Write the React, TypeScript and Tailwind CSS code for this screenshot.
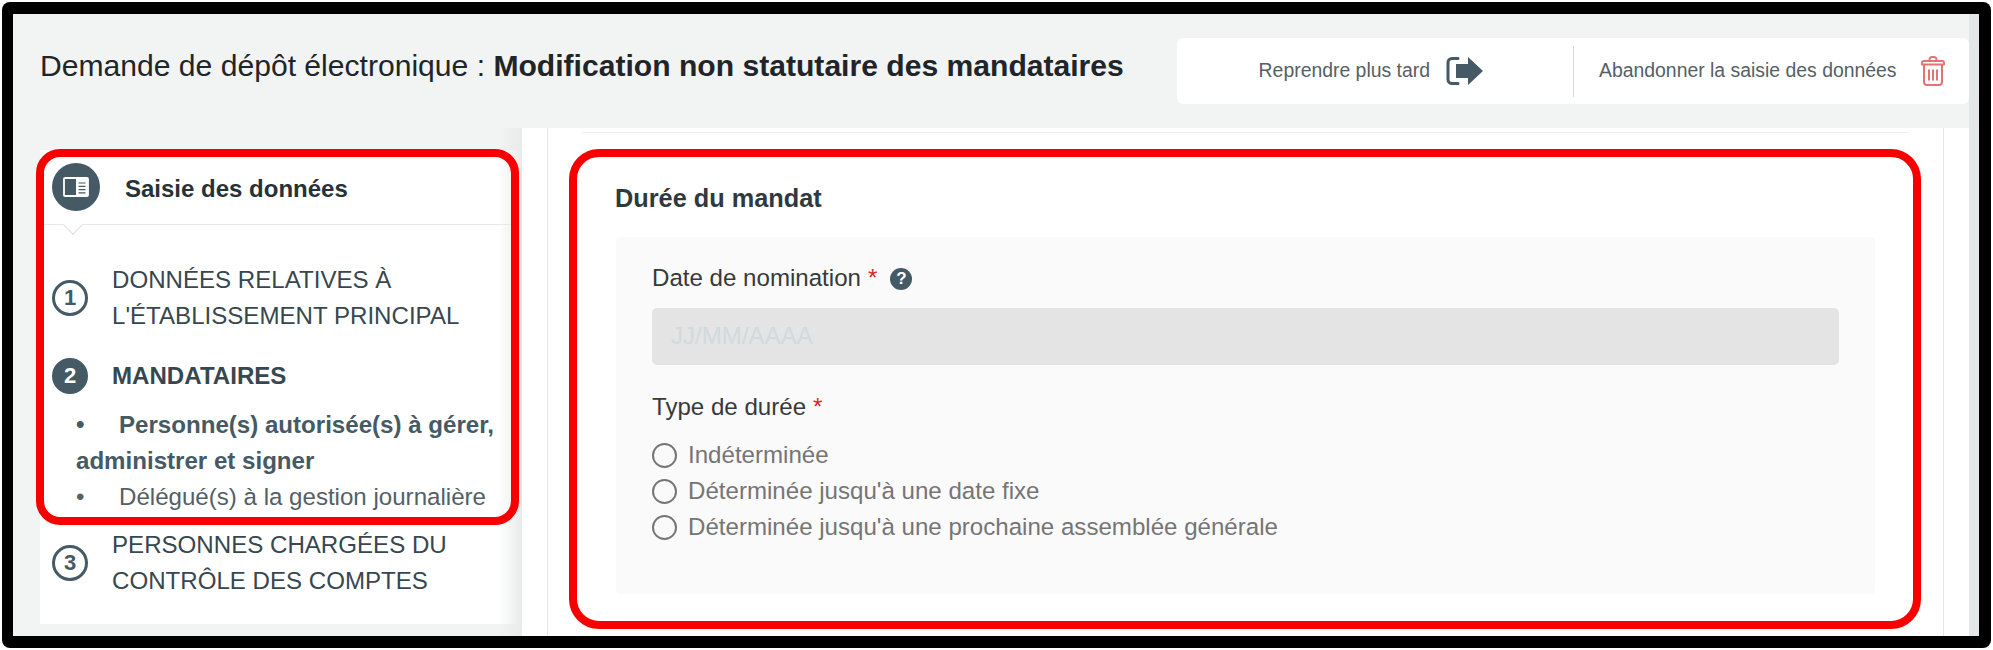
import { ReactNode } from 'react';

const font = "font-['Liberation_Sans',Arial,sans-serif]";

function BookIcon() {
  return (
    <svg width="26" height="20" viewBox="0 0 26 20" fill="none">
      <rect x="1" y="1" width="24" height="18" rx="1" stroke="white" strokeWidth="1.8" />
      <rect x="13" y="1" width="12" height="18" fill="white" />
      <path d="M15.500 6h7M15.500 9.300h7M15.500 12.600h7M15.500 15.800h7" stroke="#455a64" strokeWidth="1.200" />
    </svg>
  );
}

function ExitIcon() {
  return (
    <svg width="38" height="30" viewBox="0 0 38 30" fill="none">
      <path d="M12 2.500H6a4 4 0 0 0-4 4v17a4 4 0 0 0 4 4h6" stroke="#455a64" strokeWidth="3" strokeLinecap="round" />
      <path d="M10 8h12V1l15 14-15 14v-7H10z" fill="#455a64" />
    </svg>
  );
}

function TrashIcon() {
  return (
    <svg width="26" height="30" viewBox="0 0 26 30" fill="none" stroke="#e57373" strokeWidth="2">
      <path d="M2 8.500V7a2 2 0 0 1 2-2h18a2 2 0 0 1 2 2v1.500z" strokeLinejoin="round" />
      <path d="M9.500 5V3.500A2.500 2.500 0 0 1 12 1h2a2.500 2.500 0 0 1 2.500 2.500V5" />
      <path d="M4 8.500V26a3 3 0 0 0 3 3h12a3 3 0 0 0 3-3V8.500" />
      <path d="M9 13.500v11M13 13.500v11M17 13.500v11" />
    </svg>
  );
}

function StepBadge({ n, active }: { n: number; active?: boolean }) {
  return (
    <span
      className={
        active
          ? 'flex h-9 w-9 shrink-0 items-center justify-center rounded-full border-[3px] border-[#455a64] bg-[#455a64] text-[22px] font-bold leading-none text-white'
          : 'flex h-9 w-9 shrink-0 items-center justify-center rounded-full border-[3px] border-[#455a64] text-[22px] font-bold leading-none text-[#455a64]'
      }
    >
      {n}
    </span>
  );
}

function Step({ n, active, children }: { n: number; active?: boolean; children: ReactNode }) {
  return (
    <div className="flex items-center gap-[24px] pl-[12px] text-[24.100px] leading-[36px] text-[#37474f]">
      <StepBadge n={n} active={active} />
      <div className={active ? 'font-bold' : ''}>{children}</div>
    </div>
  );
}

function Radio({ label }: { label: string }) {
  return (
    <label className="flex h-[36px] items-center gap-[11px] text-[24.100px] text-[#757575]">
      <span className="h-[25px] w-[25px] shrink-0 rounded-full border-2 border-[#757575]" />
      {label}
    </label>
  );
}

function Required() {
  return <span className="ml-[7px] text-[#dc2626]">*</span>;
}

function Bullet({ children }: { children: ReactNode }) {
  return (
    <div className="flex gap-[34px]">
      <span className="w-[9px]">•</span>
      <span>{children}</span>
    </div>
  );
}

function Sidebar() {
  return (
    <aside className="relative h-[508px] w-[482px] shrink-0">
      <div className="mt-[22px] h-[474px] bg-white">
        <div className="relative flex h-[75px] items-center border-b border-[#e8e8e8] pl-[12px]">
          <span className="flex h-[48px] w-[48px] items-center justify-center rounded-full bg-[#455a64]">
            <BookIcon />
          </span>
          <span className="ml-[25px] mt-[3px] text-[24px] font-bold leading-[32px] text-[#263238]">Saisie des données</span>
          <span className="absolute left-[26px] top-[68px] h-[14px] w-[14px] rotate-45 border-b border-r border-[#e0e0e0] bg-white" />
        </div>
        <div className="pt-[37px]">
          <Step n={1}>
            DONNÉES RELATIVES À
            <br />
            L'ÉTABLISSEMENT PRINCIPAL
          </Step>
          <div className="mt-[24px]">
            <Step n={2} active>
              MANDATAIRES
            </Step>
          </div>
          <div className="mt-[13px] pl-[36px] pr-[8px] text-[24.100px] leading-[36px]">
            <div className="font-bold text-[#455a64]">
              <Bullet>Personne(s) autorisée(s) à gérer,</Bullet>
              <p>administrer et signer</p>
            </div>
            <div className="text-[#546066]">
              <Bullet>Délégué(s) à la gestion journalière</Bullet>
            </div>
          </div>
          <div className="mt-[12px]">
            <Step n={3}>
              PERSONNES CHARGÉES DU
              <br />
              CONTRÔLE DES COMPTES
            </Step>
          </div>
        </div>
      </div>
      <div className="pointer-events-none absolute inset-y-0 right-0 w-[24px] bg-gradient-to-r from-transparent to-[#e9ebeb]" />
    </aside>
  );
}

function MainForm() {
  return (
    <main className="flex-1 bg-white px-[25px]">
      <div className="h-full border-x border-[#e6e6e6]">
        <div className="mx-[34px] h-[5px] border-b border-[#f0f0f0]" />
        <h2 className="ml-[67px] mt-[50px] text-[25.300px] font-bold leading-[30px] text-[#2f3a3f]">Durée du mandat</h2>
        <section className="mx-[68px] mt-[24px] h-[357px] rounded-[4px] bg-[#fafafa] px-[36px] pt-[26px]">
          <div className="flex items-center text-[24.100px] leading-[30px] text-[#37393b]">
            Date de nomination
            <Required />
            <span className="ml-[13px] mt-[2px] flex h-[22px] w-[22px] items-center justify-center rounded-full bg-[#455a64] text-[17px] font-bold text-white">
              ?
            </span>
          </div>
          <div className="mt-[15px] flex h-[57px] items-center rounded-[5px] bg-[#e4e4e4] px-[19px] text-[24.100px] text-[#d3d9de]">
            JJ/MM/AAAA
          </div>
          <div className="mt-[27px] flex items-center text-[24.100px] leading-[30px] text-[#37393b]">
            Type de durée
            <Required />
          </div>
          <div className="mt-[15px]">
            <Radio label="Indéterminée" />
            <Radio label="Déterminée jusqu'à une date fixe" />
            <Radio label="Déterminée jusqu'à une prochaine assemblée générale" />
          </div>
        </section>
      </div>
    </main>
  );
}

export default function App() {
  return (
    <div className={`h-[650px] w-[1993px] overflow-hidden bg-white p-[2px] ${font}`}>
      <div className="h-[646px] rounded-[8px] bg-black pb-[12px] pl-[11px] pr-[12px] pt-[12px]">
        <div className="relative flex h-[622px] flex-col overflow-hidden bg-[#f2f4f4] pr-[10px]">
          <div className="absolute inset-y-0 right-0 w-[10px] bg-[#e4e7e7]" />
          <header className="flex h-[114px] shrink-0 items-start justify-between pl-[27px]">
            <h1 className="mt-[32px] whitespace-nowrap text-[30.100px] leading-[40px] text-[#212529]">
              Demande de dépôt électronique : <b>Modification non statutaire des mandataires</b>
            </h1>
            <div className="mt-[24px] flex h-[66px] w-[792px] shrink-0 items-center rounded-[6px] bg-white text-[19.400px] text-[#546066]">
              <div className="flex w-[396px] items-center justify-end gap-[16px] pr-[89px]">
                Reprendre plus tard
                <ExitIcon />
              </div>
              <div className="h-[51px] w-px bg-[#d5d8d8]" />
              <div className="flex flex-1 items-center gap-[23px] pl-[25px]">
                Abandonner la saisie des données
                <TrashIcon />
              </div>
            </div>
          </header>
          <div className="flex min-h-0 flex-1 pl-[27px]">
            <Sidebar />
            <MainForm />
          </div>
          {/* red annotation frames drawn over the page */}
          <div className="pointer-events-none absolute left-[23px] top-[135px] h-[376px] w-[483px] rounded-[24px] border-[8px] border-[#f80000]" />
          <div className="pointer-events-none absolute left-[556px] top-[135px] h-[480px] w-[1352px] rounded-[30px] border-[8px] border-[#f80000]" />
        </div>
      </div>
    </div>
  );
}
